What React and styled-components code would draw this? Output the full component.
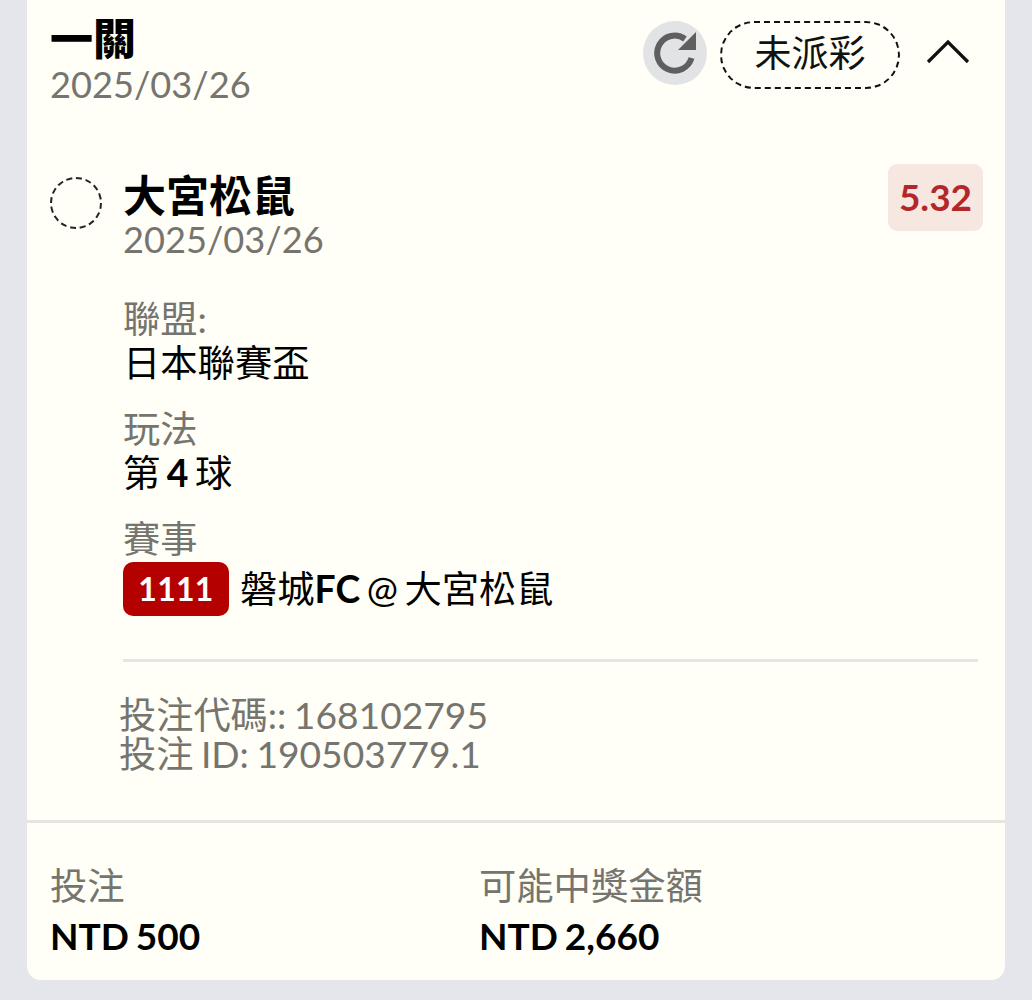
import React from "react";
import styled, { createGlobalStyle } from "styled-components";

const Global = createGlobalStyle`
  html, body { margin: 0; padding: 0; background: #e4e6ec; }
  body { width: 1032px; height: 1000px; overflow: hidden; font-family: Lato, "Noto Sans CJK TC", sans-serif; }
`;
const Page = styled.div`
  width: 1032px; height: 1000px; box-sizing: border-box; padding: 0 27px; overflow: hidden;
`;
const Card = styled.div`
  margin-top: -16px; height: 996px; background: #fffef7; border-radius: 14px;
  display: flex; flex-direction: column;
`;
const Header = styled.div`
  display: flex; justify-content: space-between; align-items: flex-start;
  padding: 30px 24px 0 24px; height: 150px; flex: none;
`;
const TitleBlock = styled.div`display: flex; flex-direction: column;`;
const Title = styled.div`
  font-size: 43px; line-height: 50px; font-weight: 900; color: #000; margin-left: -1px;
`;
const SubDate = styled.div`
  font-size: 36.2px; line-height: 40px; color: #75746e; margin-left: -1px;
`;
const Actions = styled.div`
  display: flex; align-items: center; margin-top: 7px;
`;
const Refresh = styled.div`
  width: 64px; height: 64px; border-radius: 50%; background: #e2e3e5;
  display: flex; align-items: center; justify-content: center; margin: -4px 13px 0 0;
`;
const Status = styled.div`
  width: 180px; height: 68px; box-sizing: border-box; border: 2px dashed #111; border-radius: 34px;
  display: flex; align-items: center; justify-content: center; padding-bottom: 8px;
  font-size: 37px; color: #111; margin-right: 26px;
`;
const Chevron = styled.svg`width: 44px; height: 26px; margin: -6px 11px 0 0;`;
const Selection = styled.div`
  display: flex; padding: 0 22px 0 23px; flex: none;
`;
const Radio = styled.div`
  width: 52px; height: 52px; box-sizing: border-box; border: 2px dashed #222; border-radius: 50%;
  margin-top: 13px; margin-right: 21px; flex: none;
`;
const SelectionMain = styled.div`flex: 1; display: flex; flex-direction: column;`;
const TeamRow = styled.div`display: flex; justify-content: space-between; align-items: flex-start;`;
const Team = styled.div`font-size: 43px; line-height: 52px; font-weight: 700; color: #000; margin-top: 6px;`;
const Odds = styled.div`
  width: 95px; height: 67px; box-sizing: border-box; padding-bottom: 3px; background: #f7e7e1; border-radius: 9px;
  display: flex; align-items: center; justify-content: center;
  font-size: 37px; font-weight: 700; color: #b3272a;
`;
const TeamDate = styled.div`font-size: 36.2px; line-height: 40px; color: #75746e; margin-top: -12px;`;
const Field = styled.div`display: flex; flex-direction: column; margin-top: ${p => p.$top}px;`;
const Label = styled.div`font-size: 37.3px; line-height: 46px; color: #75746e;`;
const Value = styled.div`
  font-size: 37.3px; line-height: 44px; color: #000; display: flex; align-items: center; white-space: pre;
  word-spacing: -3px; margin-top: -1px;
`;
const Tag = styled.span`
  width: 106px; height: 54px; background: #b50000; border-radius: 10px; color: #fff;
  font-size: 32px; font-weight: 700; display: inline-flex; align-items: center; justify-content: center;
  margin: 1px 11px 0 0; letter-spacing: 0.3px;
`;
const Bold = styled.b`font-weight: 700;`;
const Divider = styled.hr`
  border: 0; height: 3px; background: #e6e5df; margin: 43px 5px 0 0;
`;
const Codes = styled.div`
  margin: 33px 0 0 -4px; font-size: 37.2px; line-height: 39px; color: #75746e; word-spacing: -2px;
`;
const Footer = styled.div`
  margin-top: 47px; border-top: 3px solid #e6e5df; padding: 39px 24px 0; display: grid;
  grid-template-columns: 429px 1fr; flex: none;
`;
const FooterLabel = styled.div`font-size: 37.3px; line-height: 48px; color: #75746e; margin-left: -1px;`;
const FooterValue = styled.div`
  font-size: 37px; line-height: 44px; font-weight: 700; color: #000; margin: 4px 0 0 -1px; word-spacing: -2px;
`;

export default function App() {
  return (
    <Page>
      <Global />
      <Card>
        <Header>
          <TitleBlock>
            <Title>一關</Title>
            <SubDate>2025/03/26</SubDate>
          </TitleBlock>
          <Actions>
            <Refresh>
              <svg width="44" height="44" viewBox="0 0 44 44">
                <path d="M38.5 27A17.5 17.5 0 1 1 32 8" fill="none" stroke="#5f5f5f" strokeWidth="6" />
                <path d="M43 1V19H25Z" fill="#5f5f5f" />
              </svg>
            </Refresh>
            <Status>未派彩</Status>
            <Chevron viewBox="0 0 44 26">
              <path d="M2 23L22 3L42 23" fill="none" stroke="#111" strokeWidth="3.2" />
            </Chevron>
          </Actions>
        </Header>
        <Selection>
          <Radio />
          <SelectionMain>
            <TeamRow>
              <Team>大宮松鼠</Team>
              <Odds>5.32</Odds>
            </TeamRow>
            <TeamDate>2025/03/26</TeamDate>
            <Field $top={37}>
              <Label>聯盟:</Label>
              <Value>日本聯賽盃</Value>
            </Field>
            <Field $top={21}>
              <Label>玩法</Label>
              <Value>第 <Bold>4</Bold> 球</Value>
            </Field>
            <Field $top={21}>
              <Label>賽事</Label>
              <Value>
                <Tag>1111</Tag>
                磐城<Bold>FC</Bold> @ 大宮松鼠
              </Value>
            </Field>
            <Divider />
            <Codes>
              投注代碼:: 168102795
              <br />
              投注 ID: 190503779.1
            </Codes>
          </SelectionMain>
        </Selection>
        <Footer>
          <div>
            <FooterLabel>投注</FooterLabel>
            <FooterValue>NTD 500</FooterValue>
          </div>
          <div>
            <FooterLabel>可能中獎金額</FooterLabel>
            <FooterValue>NTD 2,660</FooterValue>
          </div>
        </Footer>
      </Card>
    </Page>
  );
}
